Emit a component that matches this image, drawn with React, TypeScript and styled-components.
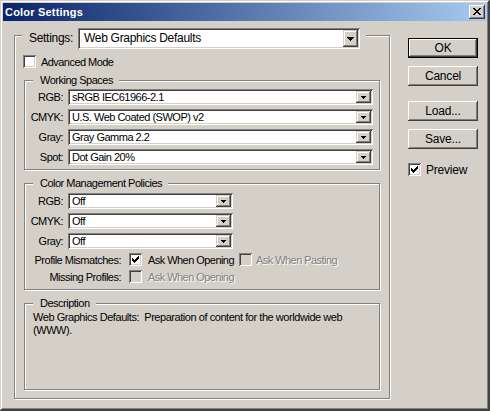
import React from 'react';
import styled, { createGlobalStyle } from 'styled-components';

const FONT = `"Liberation Sans", Arial, sans-serif`;

const Global = createGlobalStyle`
  html, body { margin: 0; padding: 0; background: #d4d0c8; }
  body { font-family: ${FONT}; }
  * { box-sizing: border-box; }
`;

const Window = styled.div`
  width: 490px;
  height: 411px;
  background: #d4d0c8;
  padding: 3px;
  box-shadow: inset -1px -1px #404040, inset 1px 1px #d4d0c8,
    inset -2px -2px #404040, inset 2px 2px #fff, inset -3px -3px #808080;
  display: flex;
  flex-direction: column;
  font-family: ${FONT};
  font-size: 11px;
  letter-spacing: -0.5px;
  color: #000;
`;

const TitleBar = styled.div`
  height: 18px;
  flex: none;
  display: flex;
  align-items: center;
  justify-content: space-between;
  padding: 0 2px;
  background: linear-gradient(to right, #0a246a, #a6caf0);
`;

const Title = styled.span`
  color: #fff;
  font-weight: bold;
  font-size: 11px;
  letter-spacing: 0.2px;
`;

const CloseButton = styled.div`
  width: 16px;
  height: 14px;
  background: #d4d0c8;
  box-shadow: inset -1px -1px #404040, inset 1px 1px #fff,
    inset -2px -2px #808080;
  display: flex;
  align-items: center;
  justify-content: center;
  padding-bottom: 1px;
`;

const Body = styled.div`
  flex: 1;
  display: flex;
  align-items: flex-start;
  padding: 14px 0 0 11px;
`;

const GroupBox = styled.div<{ $w?: number; $h: number; $pt: number; $px?: number }>`
  position: relative;
  flex: none;
  ${(p) => (p.$w ? `width: ${p.$w}px;` : '')}
  height: ${(p) => p.$h}px;
  border: 1px solid #808080;
  box-shadow: inset 1px 1px #fff, 1px 1px #fff;
  padding: ${(p) => p.$pt}px ${(p) => p.$px ?? 0}px 0 ${(p) => p.$px ?? 0}px;
  display: flex;
  flex-direction: column;
`;

const Legend = styled.div<{ $left: number; $top: number; $h: number; $pr?: number }>`
  position: absolute;
  left: ${(p) => p.$left}px;
  top: ${(p) => p.$top}px;
  height: ${(p) => p.$h}px;
  padding: 0 ${(p) => p.$pr ?? 6}px 0 7px;
  background: #d4d0c8;
  display: flex;
  align-items: center;
  white-space: nowrap;
  line-height: 13px;
`;

const SettingsLabel = styled.span`
  width: 49px;
  font-size: 12px;
  letter-spacing: -0.3px;
`;

const SelectBox = styled.div<{ $w: number; $h: number }>`
  width: ${(p) => p.$w}px;
  height: ${(p) => p.$h}px;
  background: #fff;
  box-shadow: inset 1px 1px #808080, inset -1px -1px #fff,
    inset 2px 2px #404040, inset -2px -2px #d4d0c8;
  padding: 2px;
  display: flex;
  align-items: stretch;
`;

const SelectText = styled.span<{ $big?: boolean }>`
  flex: 1;
  display: flex;
  align-items: center;
  padding-left: ${(p) => (p.$big ? 4 : 2)}px;
  font-size: ${(p) => (p.$big ? 12 : 11)}px;
  letter-spacing: ${(p) => (p.$big ? -0.3 : -0.5)}px;
  white-space: nowrap;
  overflow: hidden;
`;

const DropButton = styled.div`
  width: 15px;
  flex: none;
  background: #d4d0c8;
  box-shadow: inset -1px -1px #404040, inset 1px 1px #d4d0c8,
    inset -2px -2px #808080, inset 2px 2px #fff;
  display: flex;
  align-items: center;
  justify-content: center;
`;

const CheckRow = styled.label<{ $w?: number; $gap?: number }>`
  display: flex;
  align-items: center;
  gap: ${(p) => p.$gap ?? 5}px;
  height: 13px;
  flex: none;
  ${(p) => (p.$w ? `width: ${p.$w}px;` : '')}
  white-space: nowrap;
`;

const CheckBoxBox = styled.span<{ $disabled?: boolean }>`
  width: 13px;
  height: 13px;
  flex: none;
  background: ${(p) => (p.$disabled ? '#d4d0c8' : '#fff')};
  box-shadow: inset 1px 1px #808080, inset -1px -1px #fff,
    inset 2px 2px #404040, inset -2px -2px #d4d0c8;
  display: flex;
  align-items: center;
  justify-content: center;
`;

const CheckText = styled.span<{ $disabled?: boolean; $big?: boolean }>`
  font-size: ${(p) => (p.$big ? 12 : 11)}px;
  letter-spacing: ${(p) => (p.$big ? -0.2 : -0.55)}px;
  color: ${(p) => (p.$disabled ? '#808080' : '#000')};
  text-shadow: ${(p) => (p.$disabled ? '1px 1px #fff' : 'none')};
`;

const AdvancedRow = styled.div`
  height: 13px;
  margin-left: -1px;
`;

const SubGroups = styled.div`
  margin-top: 12px;
  display: flex;
  flex-direction: column;
  gap: 13px;
`;

const FieldGrid = styled.div<{ $sel: number }>`
  display: grid;
  grid-template-columns: 38px ${(p) => p.$sel}px;
  grid-auto-rows: 16px;
  column-gap: 5px;
  row-gap: 4px;
  align-items: center;
`;

const FieldLabel = styled.span`
  text-align: right;
  white-space: nowrap;
`;

const PolicyGrid = styled.div`
  margin-top: 4px;
  display: grid;
  grid-template-columns: 96px auto;
  grid-auto-rows: 13px;
  column-gap: 8px;
  row-gap: 4px;
  align-items: center;
`;

const PolicyOptions = styled.div`
  display: flex;
  align-items: center;
`;

const DescText = styled.div`
  padding: 7px 8px 0 8px;
  line-height: 13px;
  white-space: nowrap;
  letter-spacing: -0.45px;
`;

const SideColumn = styled.div`
  margin-left: 18px;
  padding-top: 3px;
  width: 70px;
  display: flex;
  flex-direction: column;
`;

const Button = styled.div<{ $default?: boolean; $mt: number }>`
  height: 20px;
  margin-top: ${(p) => p.$mt}px;
  background: #d4d0c8;
  display: flex;
  align-items: center;
  justify-content: center;
  font-size: 12px;
  letter-spacing: -0.2px;
  ${(p) =>
    p.$default
      ? `border: 1px solid #000;
         box-shadow: inset -1px -1px #404040, inset 1px 1px #fff, inset -2px -2px #808080;`
      : `box-shadow: inset -1px -1px #404040, inset 1px 1px #fff, inset -2px -2px #808080, inset 2px 2px #d4d0c8;`}
`;

const PreviewRow = styled.div`
  margin-top: 14px;
`;

const Arrow = ({ big }: { big?: boolean }) =>
  big ? (
    <svg width="7" height="4" viewBox="0 0 7 4" shapeRendering="crispEdges">
      <path d="M0 0h7v1h-1v1h-1v1h-1v1h-1v-1h-1v-1h-1v-1h-1z" fill="#000" />
    </svg>
  ) : (
    <svg width="5" height="3" viewBox="0 0 5 3" shapeRendering="crispEdges">
      <path d="M0 0h5v1h-1v1h-1v1h-1v-1h-1v-1h-1z" fill="#000" />
    </svg>
  );

const CheckMark = () => (
  <svg width="7" height="7" viewBox="0 0 7 7" shapeRendering="crispEdges">
    <path
      d="M0 2h1v3h-1z M1 3h1v3h-1z M2 4h1v3h-1z M3 3h1v3h-1z M4 2h1v3h-1z M5 1h1v3h-1z M6 0h1v3h-1z"
      fill="#000"
    />
  </svg>
);

const CloseGlyph = () => (
  <svg width="8" height="7" viewBox="0 0 8 7" shapeRendering="crispEdges">
    <path
      d="M0 0h2v1h-2z M6 0h2v1h-2z M1 1h2v1h-2z M5 1h2v1h-2z M2 2h4v1h-4z M3 3h2v1h-2z M2 4h4v1h-4z M1 5h2v1h-2z M5 5h2v1h-2z M0 6h2v1h-2z M6 6h2v1h-2z"
      fill="#000"
    />
  </svg>
);

const Select = ({ w, h, text, big }: { w: number; h: number; text: string; big?: boolean }) => (
  <SelectBox $w={w} $h={h}>
    <SelectText $big={big}>{text}</SelectText>
    <DropButton>
      <Arrow big={big} />
    </DropButton>
  </SelectBox>
);

const Check = ({
  checked,
  disabled,
  label,
  w,
  big,
  gap,
}: {
  checked?: boolean;
  disabled?: boolean;
  label: string;
  w?: number;
  big?: boolean;
  gap?: number;
}) => (
  <CheckRow $w={w} $gap={gap}>
    <CheckBoxBox $disabled={disabled}>{checked && <CheckMark />}</CheckBoxBox>
    <CheckText $disabled={disabled} $big={big}>
      {label}
    </CheckText>
  </CheckRow>
);

const workingSpaces = [
  ['RGB:', 'sRGB IEC61966-2.1'],
  ['CMYK:', 'U.S. Web Coated (SWOP) v2'],
  ['Gray:', 'Gray Gamma 2.2'],
  ['Spot:', 'Dot Gain 20%'],
];

const policies = [
  ['RGB:', 'Off'],
  ['CMYK:', 'Off'],
  ['Gray:', 'Off'],
];

export default function App() {
  return (
    <>
      <Global />
      <Window>
        <TitleBar>
          <Title>Color Settings</Title>
          <CloseButton>
            <CloseGlyph />
          </CloseButton>
        </TitleBar>
        <Body>
          <GroupBox $w={376} $h={364} $pt={19} $px={9}>
            <Legend $left={7} $top={-8} $h={21} $pr={6}>
              <SettingsLabel>Settings:</SettingsLabel>
              <Select w={282} h={21} text="Web Graphics Defaults" big />
            </Legend>
            <AdvancedRow>
              <Check label="Advanced Mode" gap={5} />
            </AdvancedRow>
            <SubGroups>
              <GroupBox $h={90} $pt={8}>
                <Legend $left={8} $top={-7} $h={13}>
                  Working Spaces
                </Legend>
                <FieldGrid $sel={305}>
                  {workingSpaces.map(([l, v]) => (
                    <React.Fragment key={l}>
                      <FieldLabel>{l}</FieldLabel>
                      <Select w={305} h={16} text={v} />
                    </React.Fragment>
                  ))}
                </FieldGrid>
              </GroupBox>
              <GroupBox $h={107} $pt={9}>
                <Legend $left={8} $top={-7} $h={13}>
                  Color Management Policies
                </Legend>
                <FieldGrid $sel={165}>
                  {policies.map(([l, v]) => (
                    <React.Fragment key={l}>
                      <FieldLabel>{l}</FieldLabel>
                      <Select w={165} h={16} text={v} />
                    </React.Fragment>
                  ))}
                </FieldGrid>
                <PolicyGrid>
                  <FieldLabel>Profile Mismatches:</FieldLabel>
                  <PolicyOptions>
                    <Check checked label="Ask When Opening" w={110} gap={6} />
                    <Check disabled label="Ask When Pasting" gap={4} />
                  </PolicyOptions>
                  <FieldLabel>Missing Profiles:</FieldLabel>
                  <PolicyOptions>
                    <Check disabled label="Ask When Opening" gap={6} />
                  </PolicyOptions>
                </PolicyGrid>
              </GroupBox>
              <GroupBox $h={87} $pt={0}>
                <Legend $left={8} $top={-7} $h={13}>
                  Description
                </Legend>
                <DescText>
                  Web Graphics Defaults:&nbsp; Preparation of content for the worldwide web
                  <br />
                  (WWW).
                </DescText>
              </GroupBox>
            </SubGroups>
          </GroupBox>
          <SideColumn>
            <Button $default $mt={0}>OK</Button>
            <Button $mt={8}>Cancel</Button>
            <Button $mt={15}>Load...</Button>
            <Button $mt={8}>Save...</Button>
            <PreviewRow>
              <Check checked big label="Preview" gap={5} />
            </PreviewRow>
          </SideColumn>
        </Body>
      </Window>
    </>
  );
}
